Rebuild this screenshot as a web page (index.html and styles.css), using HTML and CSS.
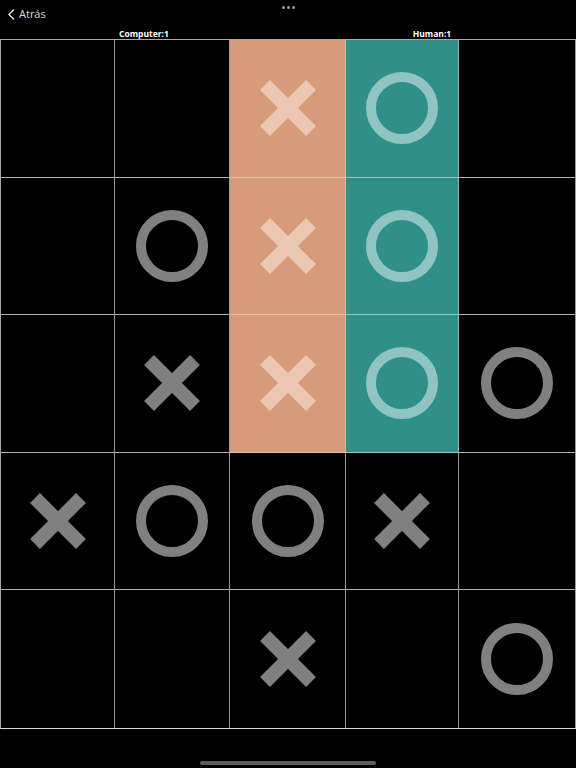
FILE: index.html
```html
<!DOCTYPE html>
<html>
<head>
<meta charset="utf-8">
<link rel="stylesheet" href="styles.css">
</head>
<body>
<div class="screen">
  <div class="topbar">
    <div class="back">
      <svg class="chev" width="8" height="11" viewBox="0 0 8 11"><path d="M6.5 1 L2 5.5 L6.5 10" fill="none" stroke="#dcdcdc" stroke-width="1.6" stroke-linecap="round" stroke-linejoin="round"/></svg>
      <span>Atrás</span>
    </div>
    <div class="dots"><i></i><i></i><i></i></div>
  </div>
  <div class="scores">
    <div class="score">Computer:1</div>
    <div class="score">Human:1</div>
  </div>
  <div class="board">
    <div class="cell"></div>
    <div class="cell"></div>
    <div class="cell win-x"><svg class="x" viewBox="0 0 56 56"><path d="M5 5 L51 51 M51 5 L5 51"/></svg></div>
    <div class="cell win-o"><svg class="o" viewBox="0 0 72 72"><circle cx="36" cy="36" r="31"/></svg></div>
    <div class="cell"></div>

    <div class="cell"></div>
    <div class="cell"><svg class="o" viewBox="0 0 72 72"><circle cx="36" cy="36" r="31"/></svg></div>
    <div class="cell win-x"><svg class="x" viewBox="0 0 56 56"><path d="M5 5 L51 51 M51 5 L5 51"/></svg></div>
    <div class="cell win-o"><svg class="o" viewBox="0 0 72 72"><circle cx="36" cy="36" r="31"/></svg></div>
    <div class="cell"></div>

    <div class="cell"></div>
    <div class="cell"><svg class="x" viewBox="0 0 56 56"><path d="M5 5 L51 51 M51 5 L5 51"/></svg></div>
    <div class="cell win-x"><svg class="x" viewBox="0 0 56 56"><path d="M5 5 L51 51 M51 5 L5 51"/></svg></div>
    <div class="cell win-o"><svg class="o" viewBox="0 0 72 72"><circle cx="36" cy="36" r="31"/></svg></div>
    <div class="cell"><svg class="o" viewBox="0 0 72 72"><circle cx="36" cy="36" r="31"/></svg></div>

    <div class="cell"><svg class="x" viewBox="0 0 56 56"><path d="M5 5 L51 51 M51 5 L5 51"/></svg></div>
    <div class="cell"><svg class="o" viewBox="0 0 72 72"><circle cx="36" cy="36" r="31"/></svg></div>
    <div class="cell"><svg class="o" viewBox="0 0 72 72"><circle cx="36" cy="36" r="31"/></svg></div>
    <div class="cell"><svg class="x" viewBox="0 0 56 56"><path d="M5 5 L51 51 M51 5 L5 51"/></svg></div>
    <div class="cell"></div>

    <div class="cell"></div>
    <div class="cell"></div>
    <div class="cell"><svg class="x" viewBox="0 0 56 56"><path d="M5 5 L51 51 M51 5 L5 51"/></svg></div>
    <div class="cell"></div>
    <div class="cell"><svg class="o" viewBox="0 0 72 72"><circle cx="36" cy="36" r="31"/></svg></div>
  </div>
  <div class="footer"><div class="home"></div></div>
</div>
</body>
</html>
```

FILE: styles.css
```css
* { box-sizing: border-box; }
html, body { margin: 0; padding: 0; background: #000; }
body { font-family: "Open Sans", "Liberation Sans", sans-serif; color: #fff; }
.screen { width: 576px; height: 768px; display: flex; flex-direction: column; background: #000; }
.topbar { height: 27px; position: relative; display: flex; align-items: flex-start; }
.back { display: flex; align-items: center; gap: 4px; padding: 7px 0 0 7px; color: #dcdcdc; font-size: 11px; line-height: 14px; }
.chev { display: block; }
.dots { position: absolute; left: 282px; top: 6px; display: flex; gap: 2px; }
.dots i { display: block; width: 3px; height: 3px; border-radius: 50%; background: #9a9a9a; }
.scores { height: 12px; display: grid; grid-template-columns: 1fr 1fr; padding-top: 1px; }
.score { text-align: center; font-size: 8.5px; font-weight: 700; line-height: 11px; color: #fff; }
.board { display: grid; grid-template-columns: 114px 115px 116px 113px 117px; grid-template-rows: repeat(5, 137.6px); width: 576px; border-top: 1px solid #a8a8a8; border-left: 1px solid #a8a8a8; border-bottom: 1px solid #dcdccc; }
.cell { border-right: 1px solid #999; border-bottom: 1px solid #b4b4b4; display: flex; align-items: center; justify-content: center; }
.board .cell:nth-last-child(-n+5) { border-bottom: none; }
.win-x { background: #d89b7a; border-bottom-color: #e6c2ae; border-right-color: #e0b8a0; }
.win-o { background: #2f8f89; border-bottom-color: #9cc8c4; border-right-color: #7fb8b4; }
.x { width: 56px; height: 56px; display: block; }
.x path { stroke: #808080; stroke-width: 14; fill: none; }
.o { width: 72px; height: 72px; display: block; }
.o circle { fill: none; stroke: #808080; stroke-width: 10; }
.win-x .x path { stroke: #ebc6b2; }
.win-o .o circle { stroke: #8fc4c1; }
.footer { flex: 1; position: relative; }
.home { position: absolute; left: 200px; top: 32px; width: 176px; height: 4px; border-radius: 2px; background: #5e5e5e; }
```
